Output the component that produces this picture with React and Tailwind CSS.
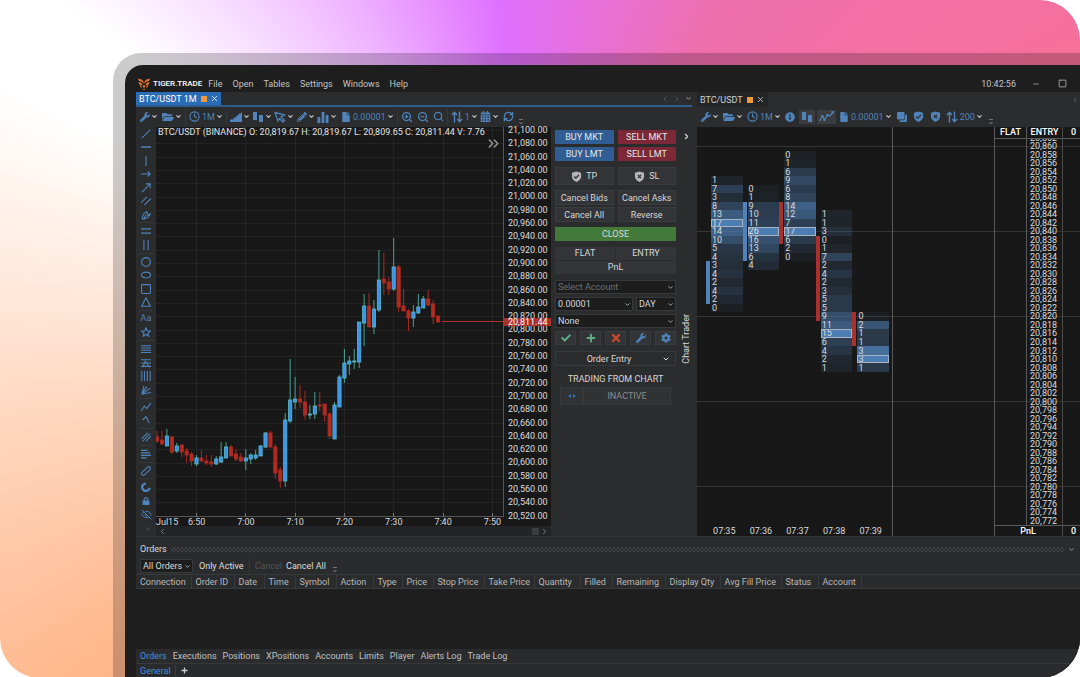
import { ChevronDown, ChevronLeft, ChevronRight, ChevronsRight, Clock, EyeOff, Minus, RefreshCw, Search, Square, X, ZoomIn, ZoomOut } from 'lucide-react'
import { FaCalendarAlt, FaCheck, FaClone, FaCog, FaFile, FaFolderOpen, FaInfoCircle, FaLock, FaPencilAlt, FaPlus, FaTimes, FaWrench } from 'react-icons/fa'

const PRICES = Array.from({ length: 30 }, (_, i) => 21100 - i * 20)
const LADDER = Array.from({ length: 45 }, (_, i) => 20860 - i * 2)
const TIMES = ['6:50', '7:00', '7:10', '7:20', '7:30', '7:40', '7:50']

// [high, low, body top, body bottom, up], one candle per minute from 6:42
const CANDLES = [
  [304, 316, 310, 314, 0], [304, 318, 313, 317, 0], [302, 319, 309, 319, 1], [309, 327, 310, 325, 0],
  [316, 326, 319, 324, 1], [318, 330, 318, 325, 0], [321, 336, 324, 328, 0], [325, 339, 327, 334, 0],
  [328, 339, 331, 337, 1], [323, 335, 331, 334, 0], [328, 338, 334, 336, 0], [328, 340, 335, 337, 0],
  [329, 338, 332, 337, 1], [315, 336, 330, 335, 1], [315, 331, 320, 331, 1], [318, 329, 320, 329, 0],
  [322, 334, 327, 332, 0], [326, 335, 330, 334, 0], [322, 343, 331, 334, 1], [326, 337, 328, 332, 1],
  [323, 333, 328, 331, 1], [318, 329, 319, 329, 1], [305, 321, 306, 320, 1], [304, 321, 306, 320, 0],
  [317, 352, 320, 346, 0], [340, 361, 343, 354, 0], [286, 360, 293, 354, 1], [232, 296, 273, 294, 1],
  [250, 282, 272, 275, 1], [258, 281, 272, 275, 0], [264, 293, 275, 288, 0], [278, 292, 287, 288, 1],
  [265, 292, 279, 287, 1], [265, 284, 278, 279, 0], [277, 295, 277, 288, 0], [285, 312, 287, 309, 0],
  [275, 312, 278, 312, 1], [248, 280, 250, 280, 1], [222, 256, 236, 251, 1], [229, 248, 234, 237, 1],
  [222, 242, 234, 235, 1], [195, 241, 195, 235, 1], [167, 219, 179, 196, 1], [166, 200, 179, 200, 0],
  [173, 207, 182, 200, 1], [123, 185, 153, 183, 1], [126, 168, 152, 156, 0], [150, 168, 155, 162, 0],
  [111, 164, 140, 162, 1], [138, 185, 140, 180, 0], [162, 184, 179, 184, 0], [182, 204, 184, 191, 0],
  [178, 200, 185, 191, 1], [167, 187, 180, 186, 1], [169, 181, 172, 181, 1], [163, 179, 172, 178, 0],
  [173, 197, 177, 190, 0], [189, 196, 189, 195, 0],
]

const CLUSTERS = [
  { time: '07:35', row: 5, bar: [15, 20], up: true, poc: 5, values: [1, 7, 3, 8, 13, 17, 14, 10, 5, 4, 3, 4, 2, 4, 2, 0] },
  { time: '07:36', row: 6, bar: [8, 15], up: true, poc: 5, values: [0, 1, 9, 10, 11, 26, 16, 13, 6, 4] },
  { time: '07:37', row: 2, bar: [8, 13], up: false, poc: 9, values: [0, 1, 6, 9, 6, 8, 14, 12, 7, 17, 6, 2, 0] },
  { time: '07:38', row: 9, bar: [12, 22], up: false, poc: 14, values: [1, 1, 3, 0, 1, 7, 2, 4, 2, 3, 5, 5, 9, 11, 15, 6, 4, 2, 1] },
  { time: '07:39', row: 21, bar: [21, 25], up: false, poc: 5, values: [0, 2, 1, 1, 3, 3, 1] },
]

const COLUMNS = [
  ['Connection', 55], ['Order ID', 43], ['Date', 30], ['Time', 31], ['Symbol', 41], ['Action', 37],
  ['Type', 29], ['Price', 31], ['Stop Price', 51], ['Take Price', 50], ['Quantity', 46], ['Filled', 32],
  ['Remaining', 53], ['Display Qty', 55], ['Avg Fill Price', 61], ['Status', 37], ['Account', 43],
]

function Icon({ children, className = 'size-3' }) {
  return (
    <svg viewBox="0 0 12 12" className={className} fill="none" stroke="currentColor" strokeWidth="1.3" aria-hidden="true">
      {children}
    </svg>
  )
}

function Logo() {
  return (
    <svg viewBox="0 0 24 24" className="size-3 text-[#e8742c]" fill="currentColor" aria-hidden="true">
      <path d="M0 1l7 2 4 4v5L8 8 2 6zM24 1l-7 2-4 4v5l3-4 6-2z" />
      <path d="M1 8l6 2 2 5-4-1-3-2zM23 8l-6 2-2 5 4-1 3-2z" />
      <path d="M3 14l4 2 1 4-3-2zM21 14l-4 2-1 4 3-2z" />
      <path d="M10 14l2 1 2-1v4l-2 2-2-2zM8 21l4 1 4-1-4 3z" />
    </svg>
  )
}

function Shield({ cross, className = 'size-[11px]', mark = '#2b2c2e' }) {
  return (
    <Icon className={className}>
      <path d="M6 .5L11 2v4c0 3-2.200 4.600-5 6C3.200 10.600 1 9 1 6V2z" fill="currentColor" stroke="none" />
      {cross ? <path d="M4.300 4.300l3.400 3.400M7.700 4.300L4.300 7.700" stroke={mark} /> : <path d="M3.500 6l1.800 1.800L8.600 4.400" stroke={mark} />}
    </Icon>
  )
}

const AreaIcon = () => <Icon><path d="M0 11V9l2-1 1 1 1-3 1.500 1L7 4l1 1 1-3 1 1 2-2v10z" fill="currentColor" stroke="none" /></Icon>
const CandleIcon = () => <Icon><path d="M1 1h4v8H1zM7 4h4v7H7z" fill="currentColor" stroke="none" /></Icon>
const CursorIcon = () => <Icon><path d="M1 1.500l9.500 2.500-3.500 2L10.500 9.500 9 11 5.500 7.500 4 10z" /></Icon>
const BarsIcon = () => <Icon><path d="M.5 6h2.800v6H.5zM4.600 1h2.800v11H4.600zM8.700 4h2.800v8H8.700z" fill="currentColor" stroke="none" /></Icon>
const UpDownIcon = () => <Icon><path d="M3.500 11.500V1.500M1 4l2.500-2.700L6 4M8.500.5v10M6.300 8l2.200 2.700L11.200 8" strokeWidth="1.400" /></Icon>
const CurveIcon = () => <Icon className="h-3 w-[15px]"><path d="M-1 10l3-5 2 4 3-5 2 1 4-4" strokeWidth="1.300" /><path d="M1 4h2v2H1zM3 8h2v2H3zM6 3h2v2H6zM11 0h2v2h-2z" fill="currentColor" stroke="none" /></Icon>

function Sep() {
  return <span className="mx-px h-4 w-px shrink-0 bg-[#36383a]" />
}

function Overflow() {
  return (
    <svg viewBox="0 0 6 8" className="ml-[2px] h-2 w-[6px] self-end text-[#777]" fill="none" stroke="currentColor" aria-hidden="true">
      <path d="M1 1.500h4M1.500 4l1.500 2 1.500-2" />
    </svg>
  )
}

function Tool({ label, icon, text, menu, active, className = '' }) {
  return (
    <button
      type="button"
      aria-label={label}
      className={`flex h-[14px] shrink-0 items-center gap-px text-[#4f83ba] ${active ? 'justify-center bg-[#3a3c40] px-[2px]' : ''} ${className}`}
    >
      {icon}
      {text && <span className="pl-px">{text}</span>}
      {menu && <ChevronDown className="size-[7px] text-[#c0c0c0]" strokeWidth={4} />}
    </button>
  )
}

function Select({ label, options, className = '', muted }) {
  return (
    <div className={`relative flex items-center border border-[#37393c] bg-[#1d1d1d] ${className}`}>
      <select aria-label={label} className={`h-3 w-full appearance-none bg-transparent py-0 pl-[2px] leading-[11px] outline-none ${muted ? 'text-[#707070]' : 'text-[#d8d8d8]'}`}>
        {options.map((o) => <option key={o}>{o}</option>)}
      </select>
      <ChevronDown className="pointer-events-none absolute right-px size-[7px] text-[#b0b0b0]" strokeWidth={3} />
    </div>
  )
}

const DRAW_TOOLS = [
  ['Line', <path d="M1 11L11 1" />],
  ['Horizontal line', <path d="M0 6h12" strokeWidth="1.800" />],
  ['Vertical line', <path d="M6 0v12" />],
  ['Ray', <path d="M0 6h11M8 3l3 3-3 3" />],
  ['Arrow', <path d="M1 11L11 1M6 1h5v5" />],
  ['Channel', <path d="M0 8l7-7M4 11l8-8" />],
  ['Brush', <path d="M1 11l2-6 4-3 1 4 3-1-3 4-5 2 3-5" />],
  null,
  ['Horizontal pair', <path d="M0 3.500h12M0 8.500h12" strokeWidth="1.500" />],
  ['Vertical pair', <path d="M3.500 0v12M8.500 0v12" />],
  null,
  ['Circle', <circle cx="6" cy="6" r="5.300" />],
  ['Ellipse', <ellipse cx="6" cy="6" rx="5.500" ry="3.500" />],
  ['Rectangle', <rect x=".7" y=".7" width="10.600" height="10.600" rx="1" />],
  ['Triangle', <path d="M6 1l5.300 10H.7z" />],
  null,
  ['Text', null],
  ['Star', <path d="M6 .8l1.500 3.600 3.900.3-3 2.500 1 3.900L6 9l-3.400 2.100 1-3.900-3-2.500 3.900-.3z" />],
  null,
  ['Levels', <path d="M0 2h12M0 4.700h12M0 7.400h12M0 10.100h12" strokeWidth="1.300" />],
  ['Extended levels', <path d="M0 2h12M0 6h12M0 10h12M2 11l3-7 3 4 3 3" />],
  ['Time zones', <path d="M1 0v12M4.300 0v12M7.600 0v12M11 0v12" />],
  ['Fan', <path d="M1 11L3.500 1M1 11l6-9M1 11l10-7M1 11l11-2" />],
  null,
  ['Polyline', <path d="M0 11l4-6 3 3 5-7" />],
  ['Angle', <path d="M2 6l4-4 4 8" />],
  null,
  ['Pitchfork', <path d="M1 8l7-7M2 11l9-9M6 11l6-6" strokeWidth="1.300" />],
  null,
  ['Volume profile', <path d="M0 1.500h8M0 4.500h11M0 7.500h12M0 10.500h7" strokeWidth="1.500" />],
  null,
  ['Ruler', <path d="M1 8l7-7c2-1 4 1 3 3l-7 7c-2 1-4-1-3-3z" />],
  null,
  ['Magnet', <path d="M6 2C2 2 0 6 2.500 9S9 11 10.500 7" strokeWidth="2.800" />],
  ['Lock', <FaLock className="size-[8px]" />],
  ['Hide', <EyeOff className="size-[11px]" />],
]

function DrawTools() {
  return (
    <div className="flex w-5 shrink-0 flex-col text-[#4f83ba]">
      <div className="flex min-h-0 flex-1 flex-col">
        {DRAW_TOOLS.map((tool, i) => {
          if (!tool) return <span key={i} className="flex min-h-0 flex-1 items-center px-[3px]"><i className="h-px w-full bg-[#36383a]" /></span>
          const [label, shape] = tool
          const plain = label === 'Lock' || label === 'Hide'
          return (
            <button key={label} type="button" aria-label={label} className="flex min-h-0 flex-[4_4_0%] items-center justify-center">
              {label === 'Text' ? <span className="leading-none">Aa</span> : plain ? shape : <Icon className="size-[10px]">{shape}</Icon>}
            </button>
          )
        })}
      </div>
      <div className="flex h-[15px] items-center justify-end pr-[5px]">
        <ChevronsRight className="size-[6px] text-[#777]" />
      </div>
    </div>
  )
}

function CandleChart() {
  return (
    <svg viewBox="0 0 348 390" preserveAspectRatio="none" className="h-0 min-h-0 w-full flex-1">
      <g stroke="#242424">
        {PRICES.map((p, i) => <path key={p} d={`M0 ${Math.round(3 + i * 13.3) + 0.5}H348`} />)}
        {TIMES.map((t, i) => <path key={t} d={`M${Math.round(40 + i * 49.3) + 0.5} 0V390`} />)}
      </g>
      {CANDLES.map(([high, low, top, bottom, up], i) => {
        const x = 40.5 + (i - 8) * 4.93
        return (
          <g key={i}>
            <path d={`M${x} ${high}V${low}`} stroke={up ? '#4aa093' : '#a32b22'} />
            <rect x={x - 1.6} y={top} width="3.2" height={Math.max(bottom - top, 1)} fill={up ? '#3d8ff5' : '#b02b22'} stroke={up ? '#57bdc4' : '#b02b22'} strokeWidth=".8" />
          </g>
        )
      })}
      <path d="M286 194.500H348" stroke="#b03030" strokeWidth="1.200" />
      <path d="M0 389.500H348M347.500 0V390" stroke="#555" />
      {TIMES.map((t, i) => <path key={t} d={`M${Math.round(40 + i * 49.3) + 0.5} 386v4`} stroke="#777" />)}
    </svg>
  )
}

function ChartTrader() {
  const flat = 'flex items-center justify-center border border-[#3a3c3f] bg-[#323437]'
  return (
    <div className="flex w-[141px] shrink-0 text-[#d8d8d8]">
      <div className="flex flex-1 flex-col pl-1 pt-[3px]">
        <div className="grid grid-cols-2 gap-x-1 gap-y-[3px] text-[#e6e6e6]">
          <button type="button" className="h-[14px] bg-[#2f5d94]">BUY MKT</button>
          <button type="button" className="h-[14px] bg-[#7d2837]">SELL MKT</button>
          <button type="button" className="h-[14px] bg-[#2f5d94]">BUY LMT</button>
          <button type="button" className="h-[14px] bg-[#7d2837]">SELL LMT</button>
        </div>
        <div className="mt-[6px] grid grid-cols-2 gap-x-1">
          <button type="button" className={`${flat} h-[18px] gap-1`}><Shield className="size-[11px] text-[#b5b5b5]" />TP</button>
          <button type="button" className={`${flat} h-[18px] gap-1`}><Shield cross className="size-[11px] text-[#b5b5b5]" />SL</button>
        </div>
        <div className="mt-[5px] grid grid-cols-2 gap-x-1 gap-y-[2px]">
          {['Cancel Bids', 'Cancel Asks', 'Cancel All', 'Reverse'].map((b) => (
            <button key={b} type="button" className={`${flat} h-[15px] whitespace-nowrap`}>{b}</button>
          ))}
        </div>
        <button type="button" className="mt-[5px] h-[14px] bg-[#437a3a]">CLOSE</button>
        <div className="mt-[6px] grid grid-cols-2 gap-px text-center leading-[13px]">
          <div className="bg-[#333538]">FLAT</div>
          <div className="bg-[#333538]">ENTRY</div>
          <div className="col-span-2 bg-[#333538]">PnL</div>
        </div>
        <Select label="Account" options={['Select Account']} muted className="mt-[6px] h-[14px]" />
        <div className="mt-[3px] flex gap-[3px]">
          <Select label="Quantity" options={['0.00001']} className="h-[14px] flex-[2]" />
          <Select label="Time in force" options={['DAY']} className="h-[14px] flex-1" />
        </div>
        <Select label="Strategy" options={['None']} className="mt-[3px] h-[14px]" />
        <div className="mt-[3px] grid grid-cols-5 gap-1">
          <button type="button" aria-label="Apply" className={`${flat} h-[14px] text-[#5fae86]`}><FaCheck className="size-[10px]" /></button>
          <button type="button" aria-label="Add" className={`${flat} h-[14px] text-[#5fae86]`}><FaPlus className="size-[10px]" /></button>
          <button type="button" aria-label="Remove" className={`${flat} h-[14px] text-[#cf4a2d]`}><FaTimes className="size-[12px]" /></button>
          <button type="button" aria-label="Edit" className={`${flat} h-[14px] text-[#4f83ba]`}><FaWrench className="size-[10px]" /></button>
          <button type="button" aria-label="Options" className={`${flat} h-[14px] text-[#4f83ba]`}><FaCog className="size-[10px]" /></button>
        </div>
        <button type="button" className="mt-[6px] flex h-[15px] items-center border border-[#37393c] bg-[#2b2c2e] pr-[5px]">
          <span className="flex-1">Order Entry</span>
          <ChevronDown className="size-2" strokeWidth={3} />
        </button>
        <p className="mt-[7px] text-center leading-[12px]">TRADING FROM CHART</p>
        <button type="button" className="mx-[5px] mt-[2px] flex h-[18px] border border-[#37393c] bg-[#303234] text-[#8d8d8d]">
          <span className="flex h-full w-[23px] items-center justify-center border-r border-[#3a3c3f] text-[#3272b5]">
            <svg viewBox="0 0 8 4" className="h-1 w-2" fill="currentColor" aria-hidden="true"><path d="M3 0v4L0 2zM5 0v4l3-2z" /></svg>
          </span>
          <span className="flex h-full flex-1 items-center justify-center">INACTIVE</span>
        </button>
      </div>
      <div className="flex w-4 flex-col items-center pl-1 pt-[5px]">
        <button type="button" aria-label="Collapse"><ChevronRight className="size-[9px]" strokeWidth={3} /></button>
        <button type="button" className="mt-[173px] rotate-180 whitespace-nowrap leading-none [writing-mode:vertical-rl]">Chart Trader</button>
      </div>
    </div>
  )
}

function LeftWindow() {
  return (
    <section className="flex min-w-0 flex-col">
      <div className="flex h-[15px] justify-between border-b-2 border-[#2b5d92]">
        <div className="flex items-center gap-[3px] bg-[#2a6cb5] pl-[3px] pr-[2px] text-white">
          BTC/USDT 1M
          <i className="ml-px size-[6px] bg-[#f0993a]" />
          <button type="button" aria-label="Close tab"><X className="size-[9px]" /></button>
        </div>
        <div className="flex items-center gap-1 text-[#666]">
          <ChevronLeft className="size-[8px]" />
          <ChevronRight className="size-[8px]" />
          <ChevronDown className="size-[7px] text-[#b0b0b0]" strokeWidth={3} />
        </div>
      </div>
      <div className="flex h-5 items-center gap-[2px] overflow-hidden pb-px pl-1 text-[#4f83ba]">
        <Tool label="Settings" icon={<FaWrench className="size-[10px]" />} menu className="mr-[2px]" />
        <Tool label="Open" icon={<FaFolderOpen className="size-3" />} menu />
        <Sep />
        <Tool label="Period" icon={<Clock className="size-[11px]" strokeWidth={2.5} />} text="1M" menu />
        <Sep />
        <Tool label="Chart style" icon={<AreaIcon />} menu />
        <Tool label="Candles" icon={<CandleIcon />} menu />
        <Tool label="Cursor" icon={<CursorIcon />} menu />
        <Tool label="Draw" icon={<FaPencilAlt className="size-[10px]" />} menu className="pl-px" />
        <Tool label="Indicators" icon={<BarsIcon />} menu />
        <Tool label="Quantity" icon={<FaFile className="size-[10px]" />} text="0.00001" menu className="pl-[2px]" />
        <Sep />
        <div className="flex gap-1">
          <Tool label="Zoom in" icon={<ZoomIn className="size-3" strokeWidth={2.5} />} />
          <Tool label="Zoom out" icon={<ZoomOut className="size-3" strokeWidth={2.5} />} />
          <Tool label="Search" icon={<Search className="size-[11px]" strokeWidth={2.5} />} />
        </div>
        <Sep />
        <Tool label="Scale" icon={<UpDownIcon />} text="1" menu />
        <Tool label="Calendar" icon={<FaCalendarAlt className="size-[11px]" />} menu />
        <Tool label="Refresh" icon={<RefreshCw className="size-[11px]" strokeWidth={3} />} className="ml-[2px]" />
        <Overflow />
      </div>
      <div className="flex min-h-0 flex-1">
        <DrawTools />
        <div className="flex min-w-0 flex-1 flex-col bg-[#181818]">
          <div className="flex min-h-0 flex-1">
            <div className="relative flex min-w-0 flex-1 flex-col">
              <CandleChart />
              <div className="flex h-[9px] text-[#dcdcdc]">
                <span className="w-4 whitespace-nowrap leading-[10px]">Jul15</span>
                <div className="-mr-[13px] grid flex-1 grid-cols-7 text-center leading-[10px]">
                  {TIMES.map((t) => <span key={t}>{t}</span>)}
                </div>
              </div>
              <p className="absolute left-[2px] top-0 whitespace-pre leading-[11px] text-[#e4e4e4]">BTC/USDT (BINANCE) O: 20,819.67 H: 20,819.67 L: 20,809.65 C: 20,811.44 V: 7.76</p>
              <ChevronsRight className="absolute right-[2px] top-2 size-[17px] text-[#999]" />
            </div>
            <div className="relative flex w-[47px] shrink-0 flex-col justify-between pb-[7px] pl-1 text-[#dcdcdc]">
              {PRICES.map((p) => <span key={p} className="h-[6px] leading-[6px]">{p.toLocaleString('en-US')}.00</span>)}
              <span className="absolute left-0 right-0 top-[48.9%] -translate-y-1/2 bg-[#a8302d] pl-1 leading-2 text-white">20,811.44</span>
            </div>
          </div>
          <div className="flex h-[10px] items-center justify-between bg-[#232426] px-[2px] text-[#999]">
            <ChevronLeft className="size-[9px]" />
            <span className="flex items-center gap-px"><i className="size-[7px] bg-[#3a3c3f]" /><ChevronRight className="size-[9px]" /></span>
          </div>
        </div>
        <ChartTrader />
      </div>
    </section>
  )
}

function ClusterChart() {
  return (
    <div className="relative flex min-h-0 flex-1 flex-col bg-[#181818] text-[#dcdcdc]">
      <div className="flex h-3 justify-end font-medium leading-[11px] text-white">
        <span className="w-8 border-b border-l border-[#5a5a5a] text-center">FLAT</span>
        <span className="w-9 border-b border-l border-[#5a5a5a] text-center">ENTRY</span>
        <span className="w-[18px] border-b border-l border-[#5a5a5a] pr-1 text-right">0</span>
      </div>
      <div className="flex h-[3px] items-end justify-end overflow-hidden">
        <span className="mr-[18px] w-9 pl-1 leading-[8px]">20,862</span>
      </div>
      <div className="grid min-h-0 flex-1">
        <div className="col-start-1 row-start-1 grid min-h-0 grid-rows-[repeat(45,minmax(0,1fr))]">
          {[1, 11, 21, 31, 41].map((row) => (
            <i key={row} className="col-start-1 h-px self-center bg-[#343434]" style={{ gridRow: row }} />
          ))}
        </div>
        <div className="col-start-1 row-start-1 ml-[9px] grid min-h-0 w-[183px] grid-cols-5 grid-rows-[repeat(45,minmax(0,1fr))]">
          {CLUSTERS.map((c, col) => {
            const max = Math.max(...c.values)
            return [
              <i
                key={c.time}
                className={`w-1 ${c.up ? 'bg-[#4f83ba]' : 'bg-[#a8302d]'}`}
                style={{ gridColumn: col + 1, gridRow: `${c.bar[0]} / ${c.bar[1]}` }}
              />,
              ...c.values.map((v, i) => (
                <span
                  key={`${c.time}-${i}`}
                  className={`ml-[5px] flex items-center pl-px leading-[8px] ${i === c.poc ? 'outline -outline-offset-1 outline-[#a9b4c0]' : ''}`}
                  style={{
                    gridColumn: col + 1,
                    gridRow: c.row + i,
                    backgroundColor: `rgb(80 130 185 / ${i === c.poc ? 0.97 : 0.07 + 0.75 * (v / max)})`,
                  }}
                >
                  {v}
                </span>
              )),
            ]
          })}
        </div>
        <div className="col-start-1 row-start-1 flex min-h-0 justify-end">
          <div className="mr-[18px] grid w-9 grid-rows-[repeat(45,minmax(0,1fr))] pl-1">
            {LADDER.map((p) => <span key={p} className="flex items-center leading-[8px]">{p.toLocaleString('en-US')}</span>)}
          </div>
        </div>
      </div>
      <div className="flex h-[11px] justify-between leading-[10px]">
        <div className="ml-[9px] grid w-[183px] grid-cols-5 pt-px text-center">
          {CLUSTERS.map((c) => <span key={c.time}>{c.time}</span>)}
        </div>
        <div className="flex font-medium text-white">
          <span className="w-[68px] border-t border-[#5a5a5a] text-center">PnL</span>
          <span className="w-[18px] border-t border-[#5a5a5a] pr-1 text-right">0</span>
        </div>
      </div>
      {/* column rules run the full height, over header and footer */}
      <div className="pointer-events-none absolute inset-0 flex">
        <i className="w-[196px] border-r border-[#5a5a5a]" />
        <i className="flex-1 border-r border-[#5a5a5a]" />
        <i className="mb-[11px] w-8 border-r border-[#5a5a5a]" />
        <i className="w-9 border-r border-[#4a4a4a]" />
        <i className="w-[17px]" />
      </div>
    </div>
  )
}

function RightWindow() {
  return (
    <section className="flex min-w-0 flex-col">
      <div className="flex h-[15px] items-center justify-between">
        <div className="flex h-full items-center gap-[3px] bg-[#232527] pl-[3px] pr-[3px] text-[#d0d0d0]">
          BTC/USDT
          <i className="ml-px size-[6px] bg-[#f0993a]" />
          <button type="button" aria-label="Close tab"><X className="size-[9px]" /></button>
        </div>
        <ChevronLeft className="mr-px size-2 text-[#777]" />
      </div>
      <div className="flex h-5 items-center gap-[3px] overflow-hidden pb-px pl-1 text-[#4f83ba]">
        <Tool label="Settings" icon={<FaWrench className="size-[10px]" />} menu className="mr-px" />
        <Tool label="Open" icon={<FaFolderOpen className="size-3" />} menu />
        <Tool label="Period" icon={<Clock className="size-[11px]" strokeWidth={2.5} />} text="1M" menu className="ml-px" />
        <Tool label="Info" icon={<FaInfoCircle className="size-[10px]" />} className="ml-px mr-px" />
        <div className="flex gap-[2px]">
          <Tool label="Clusters" icon={<CandleIcon />} active />
          <Tool label="Curve" icon={<CurveIcon />} active />
        </div>
        <Tool label="Quantity" icon={<FaFile className="size-[10px]" />} text="0.00001" menu />
        <div className="flex gap-[6px] px-[2px]">
          <Tool label="Copy" icon={<FaClone className="size-[10px] -scale-x-100" />} />
          <Tool label="Take profit" icon={<Shield />} />
          <Tool label="Stop loss" icon={<Shield cross />} />
        </div>
        <Tool label="Scale" icon={<UpDownIcon />} text="200" menu />
        <Overflow />
      </div>
      <ClusterChart />
    </section>
  )
}

function Orders() {
  return (
    <section className="border-t border-[#333537] bg-[#2a2b2d]">
      <div className="flex h-[21px] items-center gap-1 pl-1 pr-[5px] pt-[3px]">
        <h2 className="text-[#d8d8d8]">Orders</h2>
        <i className="h-[5px] flex-1 bg-[repeating-conic-gradient(#3f4143_0_25%,#2a2b2d_0_50%)] bg-[size:4px_4px]" />
        <ChevronDown className="size-[7px] text-[#aaa]" strokeWidth={3} />
      </div>
      <div className="flex h-4 items-center gap-1 pl-1 text-[#dedede]">
        <Select label="Order filter" options={['All Orders']} className="mr-[2px] h-[14px] w-[53px]" />
        <button type="button">Only Active</button>
        <Sep />
        <button type="button" disabled className="text-[#555]">Cancel</button>
        <button type="button">Cancel All</button>
        <Overflow />
      </div>
      <table className="w-full table-fixed border-collapse text-left">
        <colgroup>
          {COLUMNS.map(([name, width]) => <col key={name} style={{ width }} />)}
          <col />
        </colgroup>
        <thead>
          <tr className="h-[14px] border-y border-[#37393c]">
            {COLUMNS.map(([name]) => (
              <th key={name} className="whitespace-nowrap border-r border-[#37393c] p-0 pl-1 font-normal leading-3 text-[#b8b8b8]">{name}</th>
            ))}
            <th className="p-0" />
          </tr>
        </thead>
        <tbody>
          <tr className="h-[60px] bg-[#1e1e1e]"><td colSpan={18} /></tr>
        </tbody>
      </table>
      <nav className="flex h-[15px] items-center gap-[6px] border-b border-[#36383a] pl-1 text-[#c0c0c0]">
        {['Orders', 'Executions', 'Positions', 'XPositions', 'Accounts', 'Limits', 'Player', 'Alerts Log', 'Trade Log'].map((t, i) => (
          <button key={t} type="button" className={i === 0 ? 'text-[#3f93dd]' : ''}>{t}</button>
        ))}
      </nav>
      <div className="flex h-[14px] items-center pl-1">
        <button type="button" className="border-r border-[#3a3c3f] pr-1 leading-3 text-[#3f93dd]">General</button>
        <button type="button" aria-label="Add workspace" className="ml-[5px]"><FaPlus className="size-[7px] text-[#ccc]" /></button>
      </div>
    </section>
  )
}

export default function App() {
  return (
    <div className="min-h-screen bg-white font-[Roboto,sans-serif] text-[9px] leading-3">
      <div className="flex min-h-screen overflow-hidden rounded-[40px] bg-[conic-gradient(from_353deg_at_50%_50%,#e070ff_0deg,#ee6fae_35deg,#f5709a_70deg,#f5709a_180deg,#ffb68a_240deg,#ffffff_302deg,#ffffff_312deg,#e070ff_360deg)] pl-[113px] pt-[53px]">
        <div className="flex min-w-0 flex-1 rounded-tl-[28px] bg-black/20 pl-3 pt-3">
          <div className="flex min-w-0 flex-1 flex-col rounded-tl-[18px] bg-[#1e1e1e] pl-[11px]">
            <header className="flex h-[27px] items-center pt-[10px] text-[#c4c4c4]">
              <div className="flex items-center gap-[3px] pl-[2px] text-[8px] font-medium text-white">
                <Logo />
                TIGER.TRADE
              </div>
              <nav className="flex gap-[10px] pl-[6px]">
                {['File', 'Open', 'Tables', 'Settings', 'Windows', 'Help'].map((m) => <button key={m} type="button">{m}</button>)}
              </nav>
              <div className="ml-auto flex items-center pr-[13px]">
                <time>10:42:56</time>
                <button type="button" aria-label="Minimize" className="ml-4"><Minus className="size-2" /></button>
                <button type="button" aria-label="Maximize" className="ml-[18px]"><Square className="size-[9px]" /></button>
              </div>
            </header>
            <main className="grid min-h-0 flex-1 grid-cols-[556fr_383fr] grid-rows-1 gap-x-[5px] bg-[#2b2c2e]">
              <LeftWindow />
              <RightWindow />
            </main>
            <Orders />
          </div>
        </div>
      </div>
    </div>
  )
}
